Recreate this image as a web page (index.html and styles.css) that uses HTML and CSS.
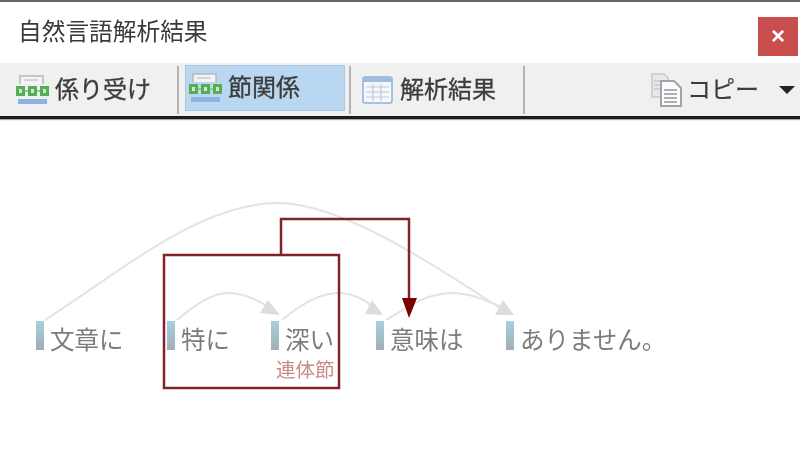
FILE: index.html
```html
<!DOCTYPE html>
<html lang="ja">
<head>
    <meta charset="UTF-8">
    <title>自然言語解析結果</title>
    <link rel="stylesheet" href="styles.css">
</head>
<body>

<div class="window">
    <div class="title-bar">
        <div class="title">自然言語解析結果</div>
        <div class="close-btn">×</div>
    </div>

    <div class="toolbar">
        <div class="tool tool-dep">
            <svg class="icon" width="34" height="32" viewBox="0 0 34 32">
                <use href="#tree-icon"></use>
            </svg>
            <span>係り受け</span>
        </div>
        <div class="sep"></div>
        <div class="tool tool-clause active">
            <svg class="icon" width="34" height="32" viewBox="0 0 34 32">
                <use href="#tree-icon"></use>
            </svg>
            <span>節関係</span>
        </div>
        <div class="sep"></div>
        <div class="tool tool-result">
            <svg class="icon" width="31" height="28" viewBox="0 0 31 28">
                <rect x="1" y="1" width="29" height="26" rx="2" fill="#f4f7fb" stroke="#8fb0d6" stroke-width="1.5"/>
                <rect x="1" y="1" width="29" height="5" fill="#9dbde0"/>
                <path d="M4 11H27M4 16H27M4 21H27M11 8V25M19 8V25" stroke="#c3c9d2" stroke-width="1.2" fill="none"/>
            </svg>
            <span>解析結果</span>
        </div>
        <div class="sep"></div>
        <div class="tool tool-copy">
            <svg class="icon" width="33" height="34" viewBox="0 0 33 34">
                <path d="M2 1H14L18 5V24H2Z" fill="#e6e8eb" stroke="#cfd1d4" stroke-width="2"/>
                <path d="M4 8H14M4 12H10M4 16H10" stroke="#c6c9cd" stroke-width="1.3" fill="none"/>
                <path d="M11 8H24L31 15V33H11Z" fill="#fbfbfb" stroke="#a0a4a8" stroke-width="2"/>
                <path d="M14 17H27M14 21H27M14 25H27M14 29H27" stroke="#94989c" stroke-width="1.4" fill="none"/>
            </svg>
            <span>コピー</span>
        </div>
        <div class="drop-arrow"></div>
    </div>

    <div class="diagram">
        <svg class="links" width="800" height="336" viewBox="0 119 800 336">
            <g fill="none" stroke="#e3e3e3" stroke-width="2">
                <path d="M45 320C120 272 200 203 278 203C340 203 430 262 500 308"/>
                <path d="M177 320C195 305 212 293 228 293C243 293 258 300 270 308"/>
                <path d="M282 320C300 305 320 293 338 293C352 293 366 300 374 308"/>
                <path d="M386 320C405 309 425 293 452 293C470 293 487 300 503 308"/>
            </g>
            <g fill="#dcdcdc">
                <path d="M495 315L503 300L514 315Z"/>
                <path d="M260 313L268 300L280 315Z"/>
                <path d="M365 314L372 300L383 315Z"/>
            </g>
            <rect x="164" y="255" width="175" height="133" fill="none" stroke="#82222a" stroke-width="2.5"/>
            <path d="M281 255V219H409V300" fill="none" stroke="#82222a" stroke-width="2.5"/>
            <path d="M402 298H417L409 318Z" fill="#7a0000"/>
        </svg>

        <div class="token token-1">文章に</div>
        <div class="token token-2">特に</div>
        <div class="token token-3">深い<span class="clause-tag">連体節</span></div>
        <div class="token token-4">意味は</div>
        <div class="token token-5">ありません。</div>
    </div>
</div>

<svg width="0" height="0" class="defs">
    <defs>
        <g id="tree-icon">
            <path d="M4 10V2H27V10" fill="#f4f4f4" stroke="#b5b8bc" stroke-width="1.5"/>
            <path d="M8 6H22" stroke="#c9ccd0" stroke-width="1.5"/>
            <path d="M8 17H12M20 17H24" stroke="#8fcb8f" stroke-width="2"/>
            <rect x="0" y="12" width="9" height="10" fill="#55ad55"/>
            <rect x="12" y="12" width="9" height="10" fill="#55ad55"/>
            <rect x="24" y="12" width="9" height="10" fill="#55ad55"/>
            <rect x="3" y="15" width="3" height="4" fill="#cfe8c8"/>
            <rect x="15" y="15" width="3" height="4" fill="#cfe8c8"/>
            <rect x="27" y="15" width="3" height="4" fill="#cfe8c8"/>
            <rect x="2" y="25" width="29" height="5" fill="#8fb2e0"/>
        </g>
    </defs>
</svg>

</body>
</html>
```

FILE: styles.css
```css
html, body {
    margin: 0;
    height: 100%;
    overflow: hidden;
    background-color: #ffffff;
}
.window {
    display: flex;
    flex-direction: column;
    height: 455px;
    width: 800px;
    font-family: "Noto Sans CJK JP", "Noto Sans", sans-serif;
    color: #333333;
    filter: blur(0.4px);
}
.defs {
    position: absolute;
}
.title-bar {
    display: flex;
    justify-content: space-between;
    align-items: flex-start;
    height: 46px;
    border-top: 2px solid #666666;
    padding: 15px 2px 0 18px;
}
.title {
    font-size: 23.7px;
    line-height: 27px;
    color: #3a3a3a;
}
.close-btn {
    width: 40px;
    height: 39px;
    background-color: #c94f4f;
    color: #ffffff;
    font-family: "Liberation Sans", sans-serif;
    font-size: 24px;
    font-weight: bold;
    line-height: 38px;
    text-align: center;
}
.toolbar {
    display: flex;
    align-items: center;
    height: 53px;
    background-color: #f0f0f0;
    border-bottom: 3px solid #1c1c1c;
    box-shadow: 0 1px 1px #aaaaaa;
    font-size: 24px;
    color: #3c3c3c;
    -webkit-text-stroke: 0.3px #3c3c3c;
}
.tool {
    display: flex;
    align-items: center;
    gap: 5px;
    white-space: nowrap;
}
.tool span {
    padding-bottom: 5px;
}
.tool-dep {
    margin-left: 16px;
    width: 161px;
}
.tool-clause {
    width: 160px;
    height: 46px;
    box-sizing: border-box;
    padding-left: 3px;
    margin: 0 4px 3px 6px;
    gap: 5px;
}
.tool-clause .icon {
    flex: none;
}
.tool-result {
    margin-left: 11px;
    width: 161px;
    gap: 7px;
}
.tool-copy {
    margin-left: 125px;
    gap: 4px;
}
.tool-copy span {
    -webkit-text-stroke: 0.2px #3c3c3c;
}
.active {
    background-color: #b9d7f1;
    border: 1px solid #a8c9e6;
}
.sep {
    width: 2px;
    height: 48px;
    background-color: #b4b4b4;
    flex: none;
}
.drop-arrow {
    width: 0;
    height: 0;
    margin-left: 20px;
    border-left: 8px solid transparent;
    border-right: 8px solid transparent;
    border-top: 8px solid #222222;
}
.diagram {
    position: relative;
    flex: 1;
}
.links {
    position: absolute;
    left: 0;
    top: 0;
}
.token {
    position: absolute;
    top: 205px;
    padding-left: 14px;
    font-size: 24.5px;
    line-height: 29px;
    color: #7c7c7c;
    white-space: nowrap;
}
.token::before {
    content: "";
    position: absolute;
    left: 0;
    top: -3px;
    width: 8px;
    height: 29px;
    background: linear-gradient(#a6d0de, #a2aeb6);
}
.token-1 {
    left: 36px;
}
.token-2 {
    left: 167px;
}
.token-3 {
    left: 271px;
}
.token-4 {
    left: 376px;
}
.token-5 {
    left: 506px;
}
.clause-tag {
    position: absolute;
    left: 5px;
    top: 33px;
    font-size: 19.5px;
    line-height: 24px;
    color: #c98a8a;
}
```
